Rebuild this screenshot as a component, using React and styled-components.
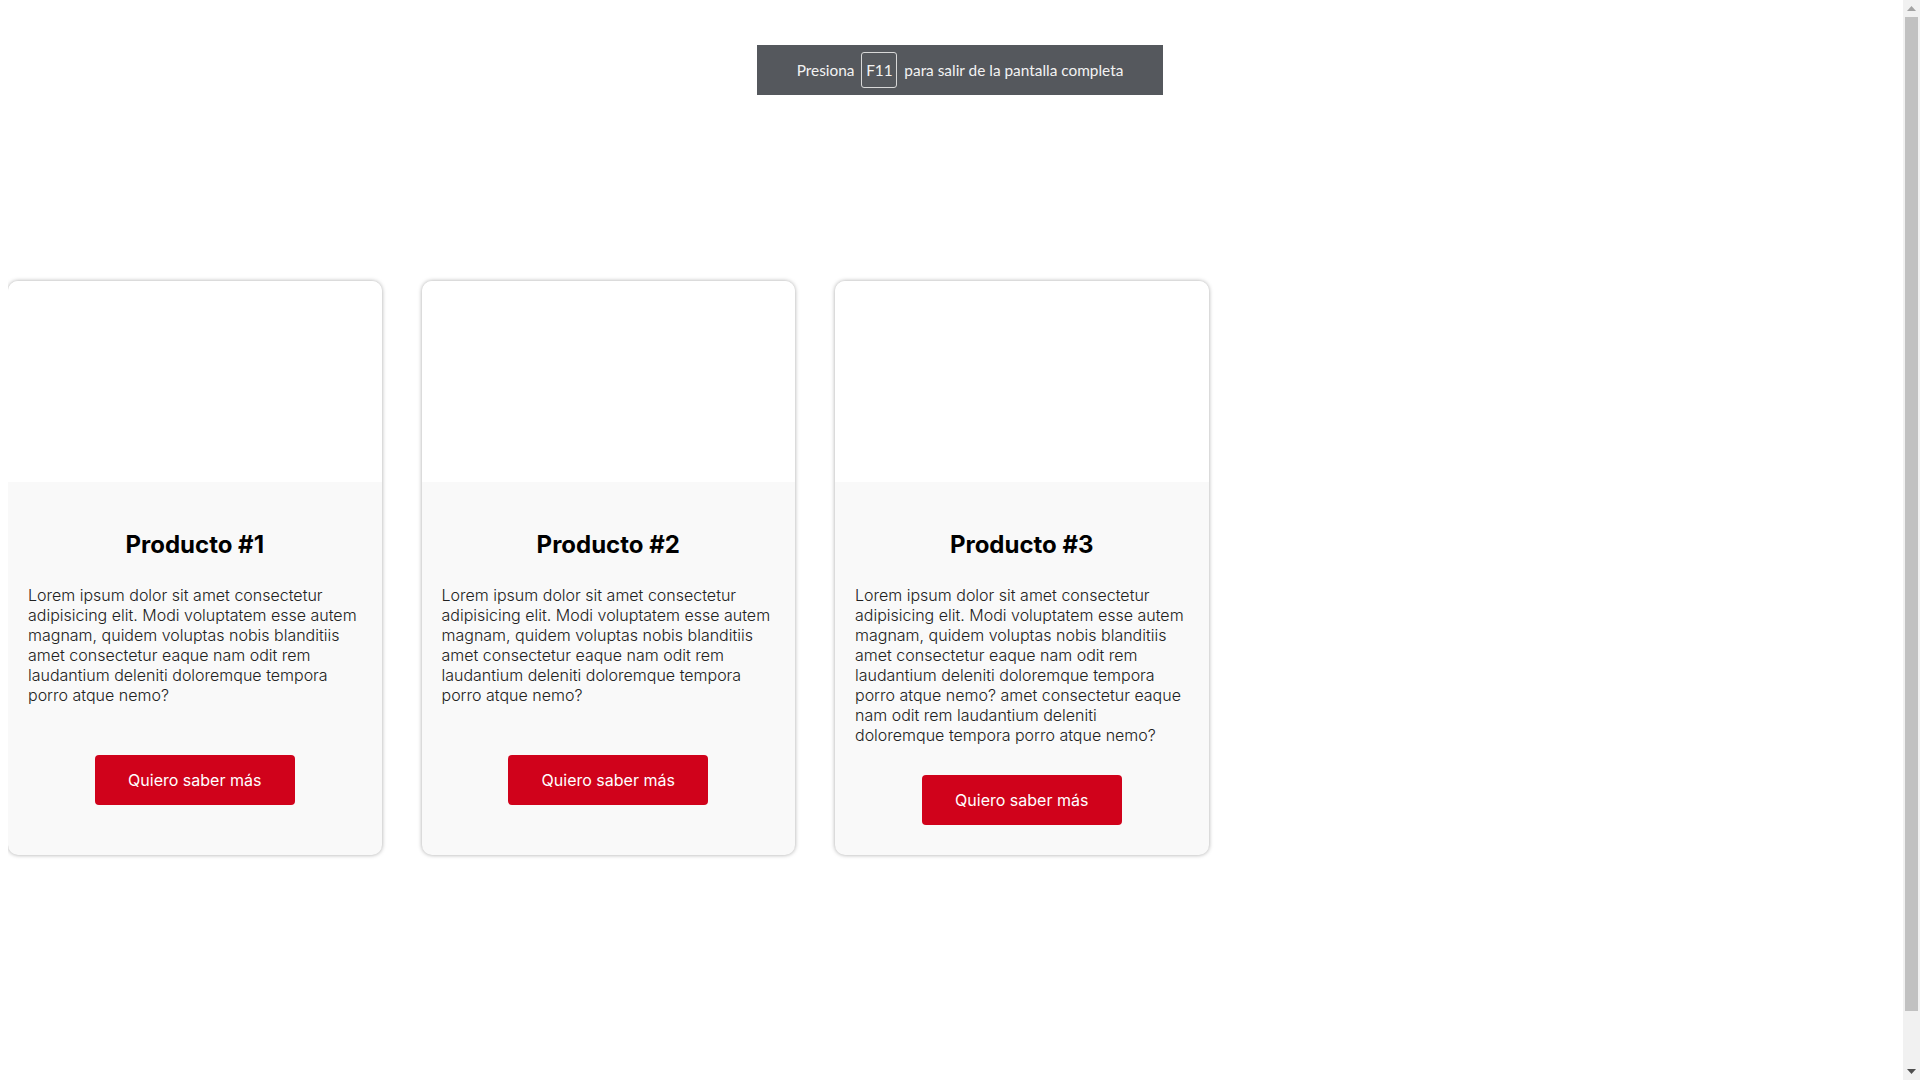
import React from "react";
import styled, { createGlobalStyle } from "styled-components";

const GlobalStyle = createGlobalStyle`
  body {
    margin: 8px;
    background: #ffffff;
    font-family: Inter, "Liberation Sans", sans-serif;
  }
`;

const productos = [
  {
    id: 1,
    title: "Producto #1",
    text: "Lorem ipsum dolor sit amet consectetur adipisicing elit. Modi voluptatem esse autem magnam, quidem voluptas nobis blanditiis amet consectetur eaque nam odit rem laudantium deleniti doloremque tempora porro atque nemo?",
  },
  {
    id: 2,
    title: "Producto #2",
    text: "Lorem ipsum dolor sit amet consectetur adipisicing elit. Modi voluptatem esse autem magnam, quidem voluptas nobis blanditiis amet consectetur eaque nam odit rem laudantium deleniti doloremque tempora porro atque nemo?",
  },
  {
    id: 3,
    title: "Producto #3",
    text: "Lorem ipsum dolor sit amet consectetur adipisicing elit. Modi voluptatem esse autem magnam, quidem voluptas nobis blanditiis amet consectetur eaque nam odit rem laudantium deleniti doloremque tempora porro atque nemo? amet consectetur eaque nam odit rem laudantium deleniti doloremque tempora porro atque nemo?",
  },
];

export default function App() {
  return (
    <>
      <GlobalStyle />
      <FullscreenNotice>
        Presiona <Key>F11</Key> para salir de la pantalla completa
      </FullscreenNotice>
      <Section>
        <CardList>
          {productos.map((p) => (
            <Card key={p.id}>
              <CardImage />
              <CardBody>
                <CardTitle>{p.title}</CardTitle>
                <CardText>{p.text}</CardText>
                <CardFooter>
                  <Button>Quiero saber más</Button>
                </CardFooter>
              </CardBody>
            </Card>
          ))}
        </CardList>
      </Section>
      <Scrollbar>
        <ScrollArrow>
          <svg width="9" height="5" viewBox="0 0 9 5">
            <path d="M4.5 0L9 5H0z" fill="#a3a3a3" />
          </svg>
        </ScrollArrow>
        <ScrollTrack>
          <ScrollThumb />
        </ScrollTrack>
        <ScrollArrow>
          <svg width="9" height="5" viewBox="0 0 9 5">
            <path d="M0 0H9L4.5 5z" fill="#505050" />
          </svg>
        </ScrollArrow>
      </Scrollbar>
    </>
  );
}

const FullscreenNotice = styled.div`
  position: fixed;
  top: 45px;
  left: calc(50vw - 203px);
  width: 406px;
  height: 50px;
  box-sizing: border-box;
  display: flex;
  align-items: center;
  justify-content: center;
  gap: 3px;
  background: #55585d;
  color: #f2f2f2;
  font-family: Lato, "Open Sans", sans-serif;
  font-size: 15.4px;
  white-space: pre;
  z-index: 10;
`;

const Key = styled.span`
  display: inline-flex;
  align-items: center;
  justify-content: center;
  width: 36px;
  height: 36px;
  box-sizing: border-box;
  border: 1px solid #d8d8d8;
  border-radius: 3px;
`;

const Section = styled.section`
  height: 1120px;
  display: flex;
  align-items: center;
`;

const CardList = styled.div`
  display: flex;
  align-items: stretch;
  gap: 40px;
`;

const Card = styled.article`
  width: 373.5px;
  display: flex;
  flex-direction: column;
  border-radius: 10px;
  overflow: hidden;
  background: #f9f9f9;
  box-shadow: 0 0 4px rgba(0, 0, 0, 0.35);
`;

const CardImage = styled.div`
  height: 201px;
  background: #ffffff;
`;

const CardBody = styled.div`
  flex: 1;
  display: flex;
  flex-direction: column;
  padding: 48px 20px 0;
`;

const CardTitle = styled.h2`
  margin: 0 0 26px;
  text-align: center;
  font-size: 24px;
  font-weight: 700;
  color: #000000;
`;

const CardText = styled.p`
  margin: 0;
  font-size: 16px;
  font-weight: 300;
  line-height: 20px;
  color: #222222;
`;

const CardFooter = styled.div`
  flex: 1;
  display: flex;
  align-items: center;
  justify-content: center;
  min-height: 110px;
`;

const Button = styled.button`
  width: 200px;
  height: 50px;
  border: none;
  border-radius: 4px;
  background: #d0021b;
  color: #ffffff;
  font-family: Inter, "Liberation Sans", sans-serif;
  font-size: 16px;
  font-weight: 400;
  cursor: pointer;
`;

const Scrollbar = styled.div`
  position: fixed;
  top: 0;
  right: 0;
  width: 17px;
  height: 100vh;
  display: flex;
  flex-direction: column;
  background: #f1f1f1;
  z-index: 20;
`;

const ScrollArrow = styled.div`
  height: 17px;
  display: flex;
  align-items: center;
  justify-content: center;
`;

const ScrollTrack = styled.div`
  flex: 1;
  padding: 0 2px 52px;
`;

const ScrollThumb = styled.div`
  height: 100%;
  background: #c1c1c1;
`;
